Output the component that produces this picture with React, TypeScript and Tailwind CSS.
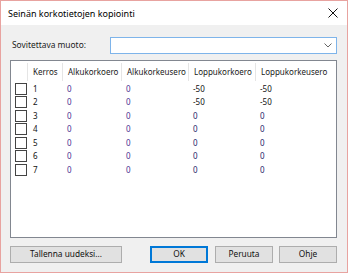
import React from "react";

const rows = [
  { n: "1", a: "0", b: "0", c: "-50", d: "-50" },
  { n: "2", a: "0", b: "0", c: "-50", d: "-50" },
  { n: "3", a: "0", b: "0", c: "0", d: "0" },
  { n: "4", a: "0", b: "0", c: "0", d: "0" },
  { n: "5", a: "0", b: "0", c: "0", d: "0" },
  { n: "6", a: "0", b: "0", c: "0", d: "0" },
  { n: "7", a: "0", b: "0", c: "0", d: "0" },
];

const cols = "grid grid-cols-[16px_35px_59px_67px_67px_1fr]";

export default function App() {
  return (
    <div
      className="w-[348px] h-[273px] border border-[#e8a3a0] bg-[#f0f0f0] flex flex-col text-[#1a1a1a] overflow-hidden"
      style={{ fontFamily: '"Noto Sans", "Open Sans", sans-serif' }}
    >
      {/* title bar */}
      <div className="h-[24px] bg-white flex items-center justify-between pl-[7px] pr-[9px] shrink-0">
        <span className="text-[9px] text-black leading-none">Seinän korkotietojen kopiointi</span>
        <svg width="10" height="10" viewBox="0 0 10 10">
          <path d="M0.5 0.5 L9.5 9.5 M9.5 0.5 L0.5 9.5" stroke="#111" strokeWidth="1" fill="none" />
        </svg>
      </div>

      {/* combo row */}
      <div className="flex items-center mt-[12px] pl-[11px] pr-[10px] h-[17px]">
        <span className="w-[98px] leading-none text-[8.4px]">Sovitettava muoto:</span>
        <div className="flex-1 h-[17px] bg-white border border-[#7eb4ea] flex items-center justify-end pr-[4px]">
          <svg width="8" height="5" viewBox="0 0 8 5">
            <path d="M0.5 0.5 L4 4 L7.5 0.5" stroke="#666" strokeWidth="1" fill="none" />
          </svg>
        </div>
      </div>

      {/* list */}
      <div className="mt-[6px] ml-[9px] mr-[10px] h-[178px] bg-white border border-[#828790] flex flex-col">
        <div className={`${cols} h-[21px] items-center text-[8px]`}>
          <div className="h-full" />
          <div className="h-[18px] border-l border-[#e5e5e5] pl-[5px] flex items-center">Kerros</div>
          <div className="h-[18px] border-l border-[#e5e5e5] pl-[5px] flex items-center">Alkukorkoero</div>
          <div className="h-[18px] border-l border-[#e5e5e5] pl-[5px] flex items-center">Alkukorkeusero</div>
          <div className="h-[18px] border-l border-[#e5e5e5] pl-[5px] flex items-center">Loppukorkoero</div>
          <div className="h-[18px] border-l border-[#e5e5e5] pl-[5px] flex items-center">Loppukorkeusero</div>
        </div>
        {rows.map((r) => (
          <div key={r.n} className={`${cols} h-[13.5px] items-center text-[8px] leading-none`}>
            <div className="pl-[4px] flex items-center">
              <div className="w-[12px] h-[12px] border border-[#444] bg-white" />
            </div>
            <div className="pl-[6px] text-[#111]">{r.n}</div>
            <div className="pl-[5px] text-[#4a2f92]">{r.a}</div>
            <div className="pl-[5px] text-[#4a2f92]">{r.b}</div>
            <div className={`pl-[5px] ${r.c === "0" ? "text-[#24246a]" : "text-[#111]"}`}>{r.c}</div>
            <div className={`pl-[5px] ${r.d === "0" ? "text-[#24246a]" : "text-[#111]"}`}>{r.d}</div>
          </div>
        ))}
      </div>

      {/* buttons */}
      <div className="flex items-center mt-[8px] pl-[9px] pr-[10px] h-[17px] text-[8.3px] text-[#111]">
        <button className="w-[112px] h-[17px] bg-[#e1e1e1] border border-[#adadad] leading-none">Tallenna uudeksi...</button>
        <div className="flex-1" />
        <button className="w-[58px] h-[17px] bg-[#e1e1e1] border-2 border-[#0078d7] leading-none">OK</button>
        <button className="ml-[7px] w-[58px] h-[17px] bg-[#e1e1e1] border border-[#adadad] leading-none">Peruuta</button>
        <button className="ml-[6px] w-[58px] h-[17px] bg-[#e1e1e1] border border-[#adadad] leading-none">Ohje</button>
      </div>
    </div>
  );
}
